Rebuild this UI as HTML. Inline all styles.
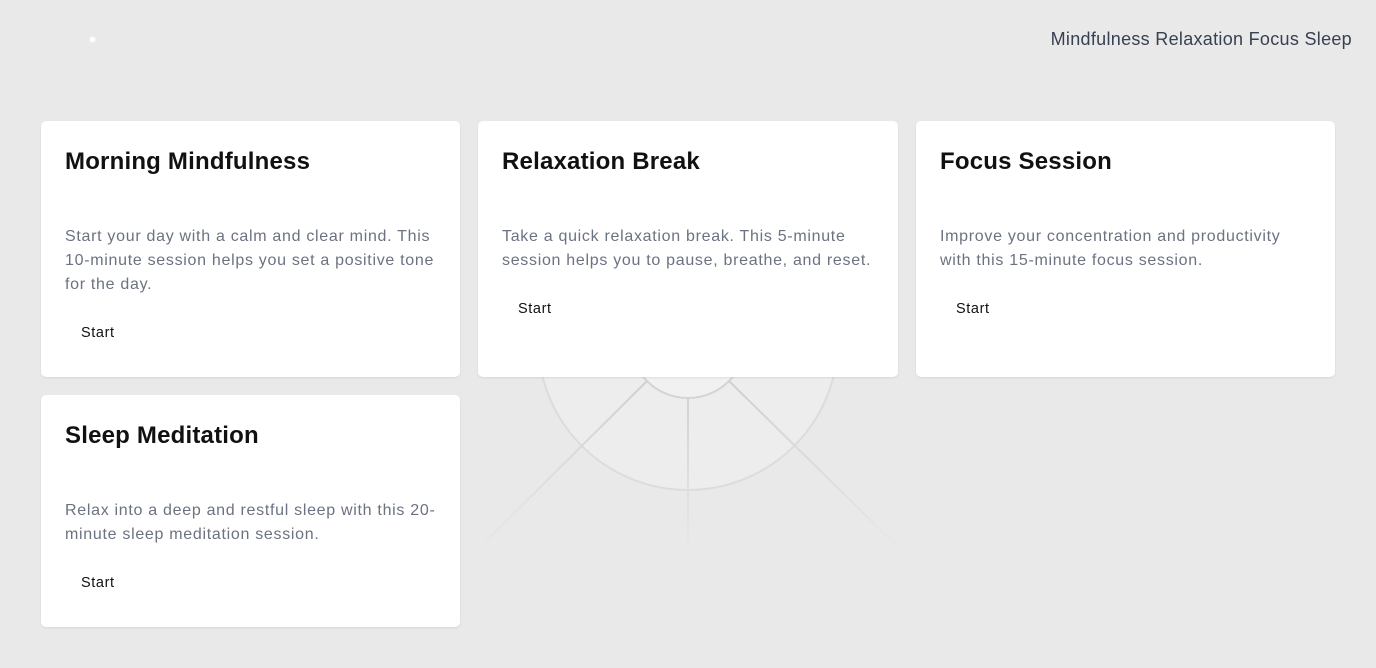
<!DOCTYPE html>
<html><head><style>
body{margin:0;width:1376px;height:668px;background:#e9e9e9;font-family:"Liberation Sans",sans-serif;position:relative;overflow:hidden}
.nav{position:absolute;right:24px;top:29px;font-size:18px;color:#374151;letter-spacing:0.3px}
.dot{position:absolute;left:90px;top:37px;width:5px;height:5px;border-radius:50%;background:#fff;box-shadow:0 0 3px #fff}
.card{position:absolute;background:#fff;border-radius:5px;box-shadow:0 1px 2px rgba(0,0,0,.08);box-sizing:border-box;padding:24px}
.card h2{margin:0;font-size:24px;font-weight:bold;color:#111;line-height:30px;position:absolute;top:26px;left:24px;letter-spacing:0.2px}
.card p{margin:0;position:absolute;left:24px;right:24px;font-size:16px;line-height:24px;color:#6b7280;letter-spacing:0.7px;top:104px}
.card .b{position:absolute;left:40px;font-size:14.5px;color:#111;letter-spacing:0.6px}
</style></head><body>
<div class="dot"></div>
<div class="nav">Mindfulness Relaxation Focus Sleep</div>
<svg style="position:absolute;left:0;top:0" width="1376" height="668">
<defs>
<linearGradient id="g2" gradientUnits="userSpaceOnUse" x1="0" y1="340" x2="0" y2="555"><stop offset="0.2" stop-color="#d0d0d0"/><stop offset="1" stop-color="#e9e9e9"/></linearGradient></defs>
<circle cx="688" cy="340" r="150" fill="#ededed" stroke="#dcdcdc" stroke-width="2"/>
<circle cx="688" cy="340" r="58" fill="#f1f1f1" stroke="#d4d4d4" stroke-width="2"/>
<g stroke="url(#g2)" stroke-width="2">
<line x1="647" y1="381" x2="475" y2="552"/>
<line x1="729" y1="381" x2="903" y2="552"/>
<line x1="688" y1="398" x2="688" y2="555"/>
</g>
</svg>
<div class="card" style="left:41px;top:121px;width:419px;height:256px"><h2>Morning Mindfulness</h2><p>Start your day with a calm and clear mind. This 10-minute session helps you set a positive tone for the day.</p><div class="b" style="top:204px">Start</div></div>
<div class="card" style="left:478px;top:121px;width:420px;height:256px"><h2>Relaxation Break</h2><p>Take a quick relaxation break. This 5-minute session helps you to pause, breathe, and reset.</p><div class="b" style="top:180px">Start</div></div>
<div class="card" style="left:916px;top:121px;width:419px;height:256px"><h2>Focus Session</h2><p>Improve your concentration and productivity with this 15-minute focus session.</p><div class="b" style="top:180px">Start</div></div>
<div class="card" style="left:41px;top:395px;width:419px;height:232px"><h2>Sleep Meditation</h2><p>Relax into a deep and restful sleep with this 20-minute sleep meditation session.</p><div class="b" style="top:180px">Start</div></div>
</body></html>
